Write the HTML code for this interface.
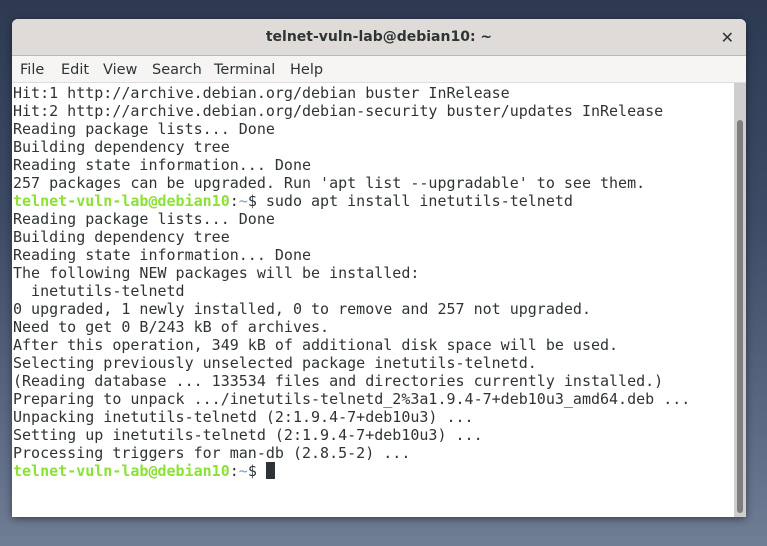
<!DOCTYPE html>
<html><head><style>
body{margin:0;width:767px;height:546px;overflow:hidden;background:linear-gradient(180deg,#2d3a52 0%,#3d4b66 40%,#5d6b85 80%,#6f7d95 100%);position:relative;font-family:"Liberation Sans","DejaVu Sans",sans-serif}
.win{position:absolute;left:12px;top:19px;width:734px;height:498px;background:#fff;border-radius:6px 6px 0 0;overflow:hidden;box-shadow:0 2px 8px rgba(0,0,0,.45)}
.title{height:36px;background:#dedbd8;border-bottom:1px solid #bfb8b1;text-align:center;line-height:37px;font-size:14px;font-weight:bold;color:#2e3436;font-family:"DejaVu Sans",sans-serif}
.close{position:absolute;right:12px;top:0;font-size:16px;font-weight:bold;color:#2e3436}
.menu{height:26px;background:#f6f5f4;border-bottom:1px solid #ddd;font-family:"DejaVu Sans",sans-serif;font-size:14.5px;color:#2e3436;line-height:28px;position:relative}
.menu span{position:absolute;top:0}
pre{margin:0;position:absolute;left:1px;top:65px;font-family:"DejaVu Sans Mono",monospace;font-size:15px;line-height:18px;color:#2e3436}
.g{color:#8ae234;font-weight:bold}.b{color:#729fcf}
.cur{display:inline-block;width:9px;height:17px;background:#2e3436;vertical-align:-3px}
.sb{position:absolute;left:722px;top:64px;width:12px;height:434px;background:#cecece}
.th{position:absolute;left:3px;top:37px;width:6px;height:393px;background:#7e7e7e;border-radius:3px}
</style></head><body>
<div class="win">
<div class="title">telnet-vuln-lab@debian10: ~<span class="close">✕</span></div>
<div class="menu"><span style="left:8px">File</span><span style="left:49px">Edit</span><span style="left:91px">View</span><span style="left:140px">Search</span><span style="left:202px">Terminal</span><span style="left:278px">Help</span></div>
<pre>Hit:1 http://archive.debian.org/debian buster InRelease
Hit:2 http://archive.debian.org/debian-security buster/updates InRelease
Reading package lists... Done
Building dependency tree
Reading state information... Done
257 packages can be upgraded. Run 'apt list --upgradable' to see them.
<span class="g">telnet-vuln-lab@debian10</span>:<span class="b">~</span>$ sudo apt install inetutils-telnetd
Reading package lists... Done
Building dependency tree
Reading state information... Done
The following NEW packages will be installed:
  inetutils-telnetd
0 upgraded, 1 newly installed, 0 to remove and 257 not upgraded.
Need to get 0 B/243 kB of archives.
After this operation, 349 kB of additional disk space will be used.
Selecting previously unselected package inetutils-telnetd.
(Reading database ... 133534 files and directories currently installed.)
Preparing to unpack .../inetutils-telnetd_2%3a1.9.4-7+deb10u3_amd64.deb ...
Unpacking inetutils-telnetd (2:1.9.4-7+deb10u3) ...
Setting up inetutils-telnetd (2:1.9.4-7+deb10u3) ...
Processing triggers for man-db (2.8.5-2) ...
<span class="g">telnet-vuln-lab@debian10</span>:<span class="b">~</span>$ <span class="cur"></span></pre>
<div class="sb"><div class="th"></div></div>
</div>
</body></html>
